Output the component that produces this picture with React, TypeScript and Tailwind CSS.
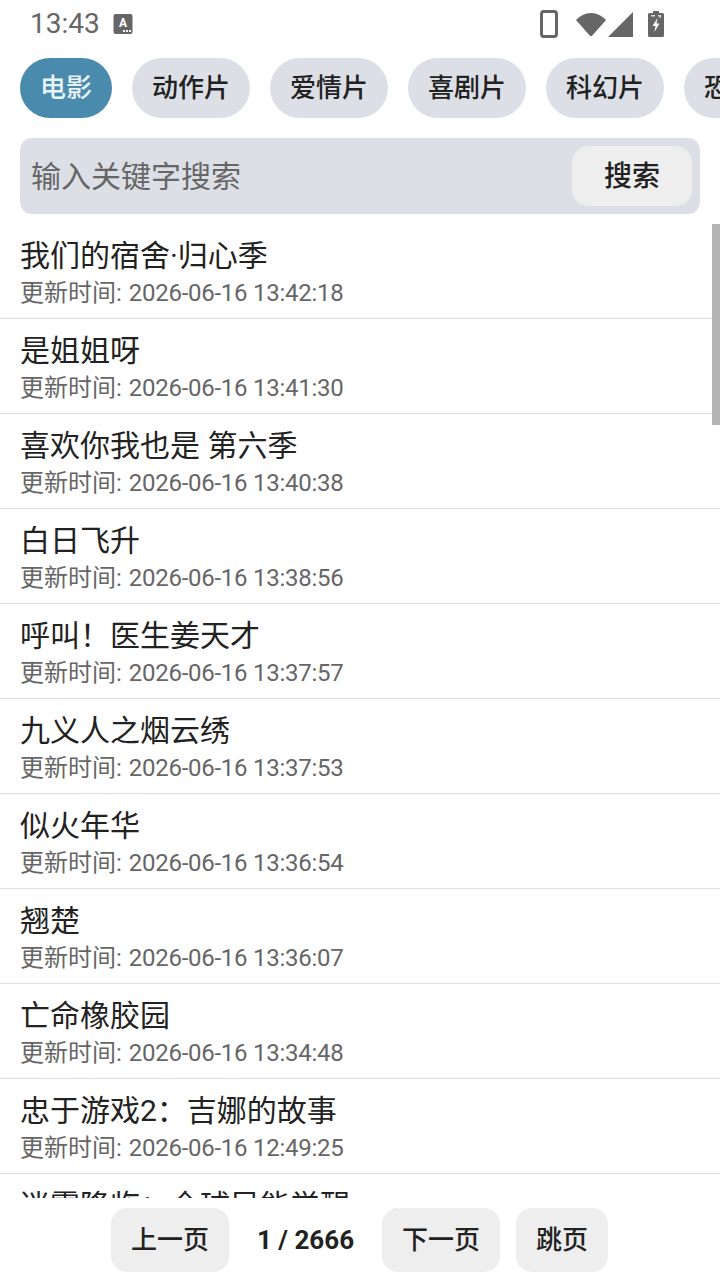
import React from 'react';

const tabs = ['电影', '动作片', '爱情片', '喜剧片', '科幻片', '恐怖片'];

const items = [
  ['我们的宿舍·归心季', '2026-06-16 13:42:18'],
  ['是姐姐呀', '2026-06-16 13:41:30'],
  ['喜欢你我也是 第六季', '2026-06-16 13:40:38'],
  ['白日飞升', '2026-06-16 13:38:56'],
  ['呼叫！医生姜天才', '2026-06-16 13:37:57'],
  ['九义人之烟云绣', '2026-06-16 13:37:53'],
  ['似火年华', '2026-06-16 13:36:54'],
  ['翘楚', '2026-06-16 13:36:07'],
  ['亡命橡胶园', '2026-06-16 13:34:48'],
  ['忠于游戏2：吉娜的故事', '2026-06-16 12:49:25'],
  // cut off by the bottom bar, its time line is never on screen
  ['迷雾降临：全球异能觉醒', ''],
];

function StatusBar() {
  return (
    <div className="flex h-[48px] shrink-0 items-center justify-between pl-[30px] pr-[56px] text-[#666666]">
      <div className="flex items-center gap-[13px]">
        <span className="text-[28px] leading-none">13:43</span>
        <svg width="20" height="22" viewBox="0 0 20 22">
          <rect x="0.5" y="1" width="19" height="20" rx="2" fill="#666666" />
          <text x="10" y="14" textAnchor="middle" fontSize="12" fontWeight="700" fill="#ffffff" fontFamily="Roboto, sans-serif">A</text>
          <rect x="10" y="17" width="2" height="2" fill="#ffffff" />
          <rect x="13" y="17" width="2" height="2" fill="#ffffff" />
          <rect x="16" y="17" width="2" height="2" fill="#ffffff" />
        </svg>
      </div>
      <div className="flex items-center">
        <svg width="18" height="28" viewBox="0 0 18 28" className="mr-[18px]">
          <rect x="1.5" y="1.5" width="15" height="25" rx="2.5" fill="none" stroke="#666666" strokeWidth="3" />
        </svg>
        <svg width="30" height="24" viewBox="0 0 30 24">
          <path d="M0 8 C4 4 9 1 15 1 C21 1 26 4 30 8 L15 25 Z" fill="#666666" />
        </svg>
        <svg width="26" height="25" viewBox="0 0 26 25" className="ml-[2px]">
          <path d="M25 0 V25 H0 Z" fill="#666666" />
        </svg>
        <svg width="16" height="26" viewBox="0 0 16 26" className="ml-[14px]">
          <path d="M5 0 H11 V2 H14.5 A1.5 1.5 0 0 1 16 3.5 V24.5 A1.5 1.5 0 0 1 14.5 26 H1.5 A1.5 1.5 0 0 1 0 24.5 V3.5 A1.5 1.5 0 0 1 1.5 2 H5 Z" fill="#666666" />
          <path d="M9.5 7 L4.5 15 H7.5 L6.5 21 L11.5 12.5 H8.5 Z" fill="#ffffff" />
          <path d="M3 4 H7 V5.5 H3 Z M10 4 H13 V7 H11.5 V5.5 H10 Z" fill="#d8d8d8" />
        </svg>
      </div>
    </div>
  );
}

export default function App() {
  return (
    <div
      className="flex h-[1280px] w-[720px] flex-col overflow-hidden bg-white"
      style={{ fontFamily: 'Roboto, "Noto Sans CJK SC", sans-serif' }}
    >
      <StatusBar />

      <div className="mt-[10px] flex shrink-0 gap-[20px] overflow-hidden pl-[20px]">
        {tabs.map((t, i) => (
          <div
            key={t}
            className={
              i === 0
                ? 'flex h-[60px] shrink-0 items-center rounded-full bg-[#4a8bad] px-[20px] pt-[1px] text-[26px] font-medium text-[#e8f4fa]'
                : 'flex h-[60px] shrink-0 items-center rounded-full bg-[#dcdfe6] px-[20px] pt-[1px] text-[26px] font-medium text-[#222222]'
            }
          >
            {t}
          </div>
        ))}
      </div>

      <div className="mx-[20px] mt-[20px] flex h-[76px] shrink-0 items-center justify-between rounded-[12px] bg-[#dcdfe6] pl-[11px] pr-[8px]">
        <span className="text-[30px] text-[#666666]">输入关键字搜索</span>
        <div className="flex h-[60px] w-[120px] items-center justify-center rounded-[16px] bg-[#eeeeee] pt-[2px] text-[28px] font-medium text-[#222222]">
          搜索
        </div>
      </div>

      <div className="relative mt-[10px] min-h-0 flex-1 overflow-hidden">
        {items.map(([title, time]) => (
          <div key={title} className="h-[95px] border-b border-[#dddddd] pl-[20px] pt-[11px]">
            <div className="h-[42px] text-[30px] leading-[42px] text-[#222222]">{title}</div>
            {time && (
              <div className="h-[32px] text-[24px] leading-[32px] text-[#666666]">
                更新时间:<span className="ml-[7px] tracking-[-0.27px]">{time}</span>
              </div>
            )}
          </div>
        ))}
        <div className="absolute right-0 top-0 h-[201px] w-[8px] bg-[#b4b4b4]" />
      </div>

      <div className="flex h-[82px] shrink-0 items-start justify-center pr-[1px] pt-[10px]">
        <div className="flex h-[64px] w-[118px] items-center justify-center rounded-[16px] bg-[#eeeeee] pt-[1px] text-[26px] font-medium text-[#222222]">
          上一页
        </div>
        <div className="flex h-[64px] w-[153px] items-center justify-center pt-[1px] text-[26px] font-bold text-[#222222]">
          1 / 2666
        </div>
        <div className="flex h-[64px] w-[118px] items-center justify-center rounded-[16px] bg-[#eeeeee] pt-[1px] text-[26px] font-medium text-[#222222]">
          下一页
        </div>
        <div className="ml-[16px] flex h-[64px] w-[92px] items-center justify-center rounded-[16px] bg-[#eeeeee] pt-[1px] text-[26px] font-medium text-[#222222]">
          跳页
        </div>
      </div>
    </div>
  );
}
